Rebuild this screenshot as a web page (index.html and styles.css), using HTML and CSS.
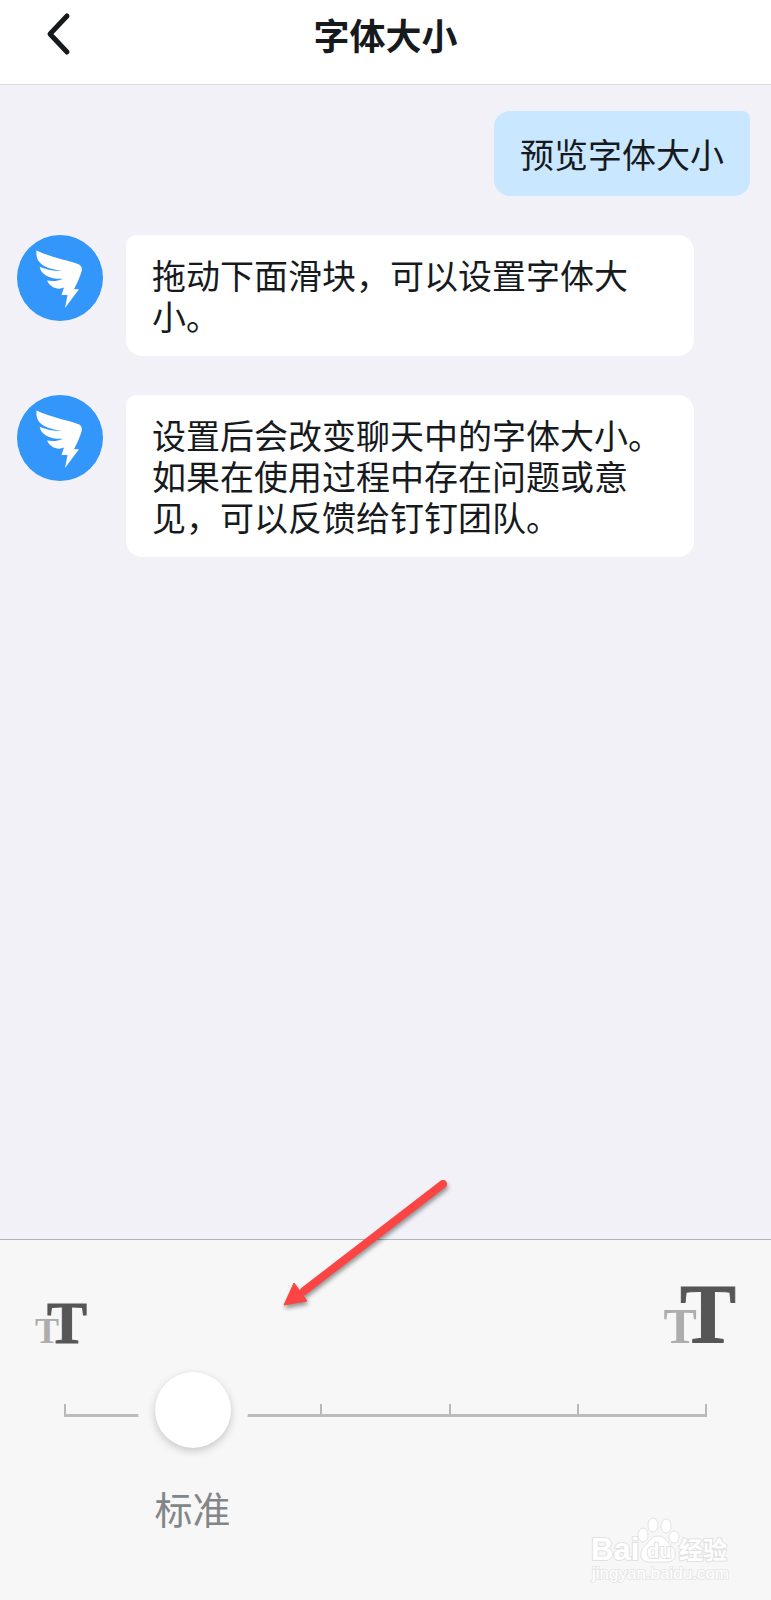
FILE: index.html
```html
<!DOCTYPE html>
<html lang="zh-CN">
<head>
    <meta charset="UTF-8">
    <meta name="viewport" content="width=device-width, initial-scale=1.0">
    <title>字体大小</title>
    <link rel="stylesheet" href="styles.css">
</head>
<body>

    <header class="header">
        <button class="back" type="button" aria-label="返回">
            <svg width="26" height="44" viewBox="0 0 26 44"><path d="M21 4L4 22L21 40"/></svg>
        </button>
        <h1>字体大小</h1>
    </header>

    <main class="chat">
        <div class="message mine">
            <p class="bubble">预览字体大小</p>
        </div>

        <div class="message">
            <svg class="avatar" viewBox="0 0 86 86">
                <circle cx="43" cy="43" r="43"/>
                <path d="M19.500 15.500C33 22 50 25 61 29C64.500 30.500 65.500 33 64.500 36.500C63 42 60 48.500 57 54.300H62L48 73L50.500 60H44.500L47 52.500C41 55.500 33 52.500 30 45.500C36 46.500 41 46 46 43.700C36 44.500 24 41 22.700 31.700C29 34.500 37 36.200 45 36C30 33.500 18 30 19.500 15.500Z"/>
            </svg>
            <p class="bubble">拖动下面滑块，可以设置字体大小。</p>
        </div>

        <div class="message">
            <svg class="avatar" viewBox="0 0 86 86">
                <circle cx="43" cy="43" r="43"/>
                <path d="M19.500 15.500C33 22 50 25 61 29C64.500 30.500 65.500 33 64.500 36.500C63 42 60 48.500 57 54.300H62L48 73L50.500 60H44.500L47 52.500C41 55.500 33 52.500 30 45.500C36 46.500 41 46 46 43.700C36 44.500 24 41 22.700 31.700C29 34.500 37 36.200 45 36C30 33.500 18 30 19.500 15.500Z"/>
            </svg>
            <p class="bubble">设置后会改变聊天中的字体大小。如果在使用过程中存在问题或意见，可以反馈给钉钉团队。</p>
        </div>
    </main>

    <footer class="panel">
        <div class="sizes" aria-hidden="true">
            <span class="size small"><span>T</span><b>T</b></span>
            <span class="size large"><span>T</span><b>T</b></span>
        </div>

        <div class="slider">
            <div class="scale"><i></i><i></i><i></i><i></i><i></i></div>
            <input type="range" id="fontSize" min="0" max="5" step="1" value="1">
        </div>

        <div class="labels">
            <label for="fontSize">标准</label>
        </div>

        <!-- 红色箭头 -->
        <svg class="arrow" width="180" height="144" viewBox="0 0 180 144">
            <path class="shaft" d="M165 8L26 115"/>
            <path class="head" d="M6 129L16 107L29 125Z"/>
        </svg>

        <svg class="watermark" width="150" height="76" viewBox="0 0 150 76">
            <ellipse cx="57" cy="23" rx="5" ry="7"/>
            <ellipse cx="67" cy="13" rx="5" ry="7"/>
            <ellipse cx="80" cy="14" rx="5" ry="7"/>
            <ellipse cx="88" cy="25" rx="5" ry="6"/>
            <path d="M72 24C79 24 82 31 87 36C92 42 89 50 81 50C76 50 68 50 63 50C54 50 53 41 57 36C62 31 65 24 72 24Z"/>
            <text class="brand" x="5" y="48">Bai</text>
            <text class="du" x="61" y="46">du</text>
            <text class="cn" x="93" y="47">经验</text>
            <text class="url" x="6" y="67">jingyan.baidu.com</text>
        </svg>
    </footer>

</body>
</html>
```
FILE: styles.css
```css
* {
    box-sizing: border-box;
}
body {
    margin: 0;
    min-height: 100vh;
    display: flex;
    flex-direction: column;
    font-family: "Noto Sans CJK SC", sans-serif;
    color: #171a1d;
    background: #f1f1f7;
}
h1, p {
    margin: 0;
}
.header {
    display: grid;
    grid-template-columns: 80px 1fr 80px;
    height: 85px;
    padding-bottom: 16px;
    align-items: center;
    background: #fff;
    border-bottom: 1px solid #dcdcde;
}
.header h1 {
    font-size: 36px;
    line-height: 44px;
    text-align: center;
}
.back {
    justify-self: end;
    width: 34px;
    height: 44px;
    padding: 0;
    border: none;
    background: none;
    cursor: pointer;
}
.back svg {
    display: block;
}
.back path {
    fill: none;
    stroke: #171a1d;
    stroke-width: 5;
    stroke-linecap: round;
    stroke-linejoin: round;
}
.chat {
    flex: 1;
    display: flex;
    flex-direction: column;
    gap: 39px;
    padding: 26px 21px 39px 17px;
}
.message {
    display: flex;
    align-items: flex-start;
    gap: 23px;
    padding-right: 56px;
}
.bubble {
    flex: 1;
    padding: 19px 26px 20px;
    font-size: 34px;
    line-height: 41px;
    background: #fff;
    border-radius: 10px 16px 16px 16px;
}
.mine {
    justify-content: flex-end;
    padding-right: 0;
}
.mine .bubble {
    flex: none;
    padding: 22px 26px;
    background: #c9e7ff;
    border-radius: 16px 8px 16px 16px;
}
.avatar {
    flex: none;
    width: 86px;
    height: 86px;
}
.avatar circle {
    fill: #3296fa;
}
.avatar path {
    fill: #fff;
}

/* 底部面板 */
.panel {
    position: relative;
    padding: 33px 26px 70px;
    background: #f7f7f7;
    border-top: 1px solid #b4b4b8;
}
.sizes {
    display: flex;
    justify-content: space-between;
    align-items: baseline;
    padding: 0 9px;
    font-family: "Liberation Serif", serif;
    font-weight: bold;
    line-height: 1;
}
.size {
    display: flex;
    align-items: baseline;
    color: #adadad;
}
.size b {
    color: #565656;
    -webkit-text-stroke: 1px #565656;
}
.small {
    font-size: 36px;
}
.small b {
    margin-left: -12px;
    font-size: 60px;
}
.large {
    font-size: 50px;
}
.large b {
    margin-left: -17px;
    font-size: 84px;
}
.slider {
    display: grid;
    align-items: center;
    margin-top: 15px;
}
.scale, .slider input {
    grid-area: 1 / 1;
}
.scale {
    display: flex;
    height: 13px;
    margin: 0 38px;
    border-right: 2px solid #b8b8b8;
    border-bottom: 3px solid #bcbcbc;
}
.scale i {
    flex: 1;
    border-left: 2px solid #b8b8b8;
}
.slider input {
    -webkit-appearance: none;
    appearance: none;
    width: 100%;
    height: 76px;
    margin: 0;
    background: none;
}
.slider input::-webkit-slider-thumb {
    -webkit-appearance: none;
    width: 76px;
    height: 76px;
    border-radius: 50%;
    background: #fff;
    box-shadow: 0 3px 8px rgba(0, 0, 0, 0.2), 0 0 0 17px #f7f7f7;
    cursor: pointer;
}
.labels {
    display: flex;
    margin: 38px 38px 0;
}
.labels label {
    width: 40%;
    font-size: 38px;
    line-height: 44px;
    text-align: center;
    color: #838688;
}
.arrow {
    position: absolute;
    top: -64px;
    left: 36%;
    overflow: visible;
    filter: drop-shadow(1px 3px 2px rgba(0, 0, 0, 0.4));
    pointer-events: none;
}
.arrow .shaft {
    stroke: #fb4444;
    stroke-width: 8;
    stroke-linecap: round;
}
.arrow .head {
    fill: #fb4444;
    stroke: #fb4444;
    stroke-width: 1;
}
.watermark {
    position: absolute;
    right: 35px;
    bottom: 12px;
    fill: #fff;
    stroke: #e2e2e2;
    stroke-width: 1;
}
.watermark text {
    font-family: "Liberation Sans", "Noto Sans CJK SC", sans-serif;
    paint-order: stroke;
    stroke-width: 2;
}
.watermark .brand {
    font-size: 31px;
    font-weight: bold;
}
.watermark .du {
    font-size: 20px;
    font-weight: bold;
}
.watermark .cn {
    font-size: 24px;
    font-weight: bold;
}
.watermark .url {
    font-size: 17px;
    stroke: #e8e8e8;
}
```
